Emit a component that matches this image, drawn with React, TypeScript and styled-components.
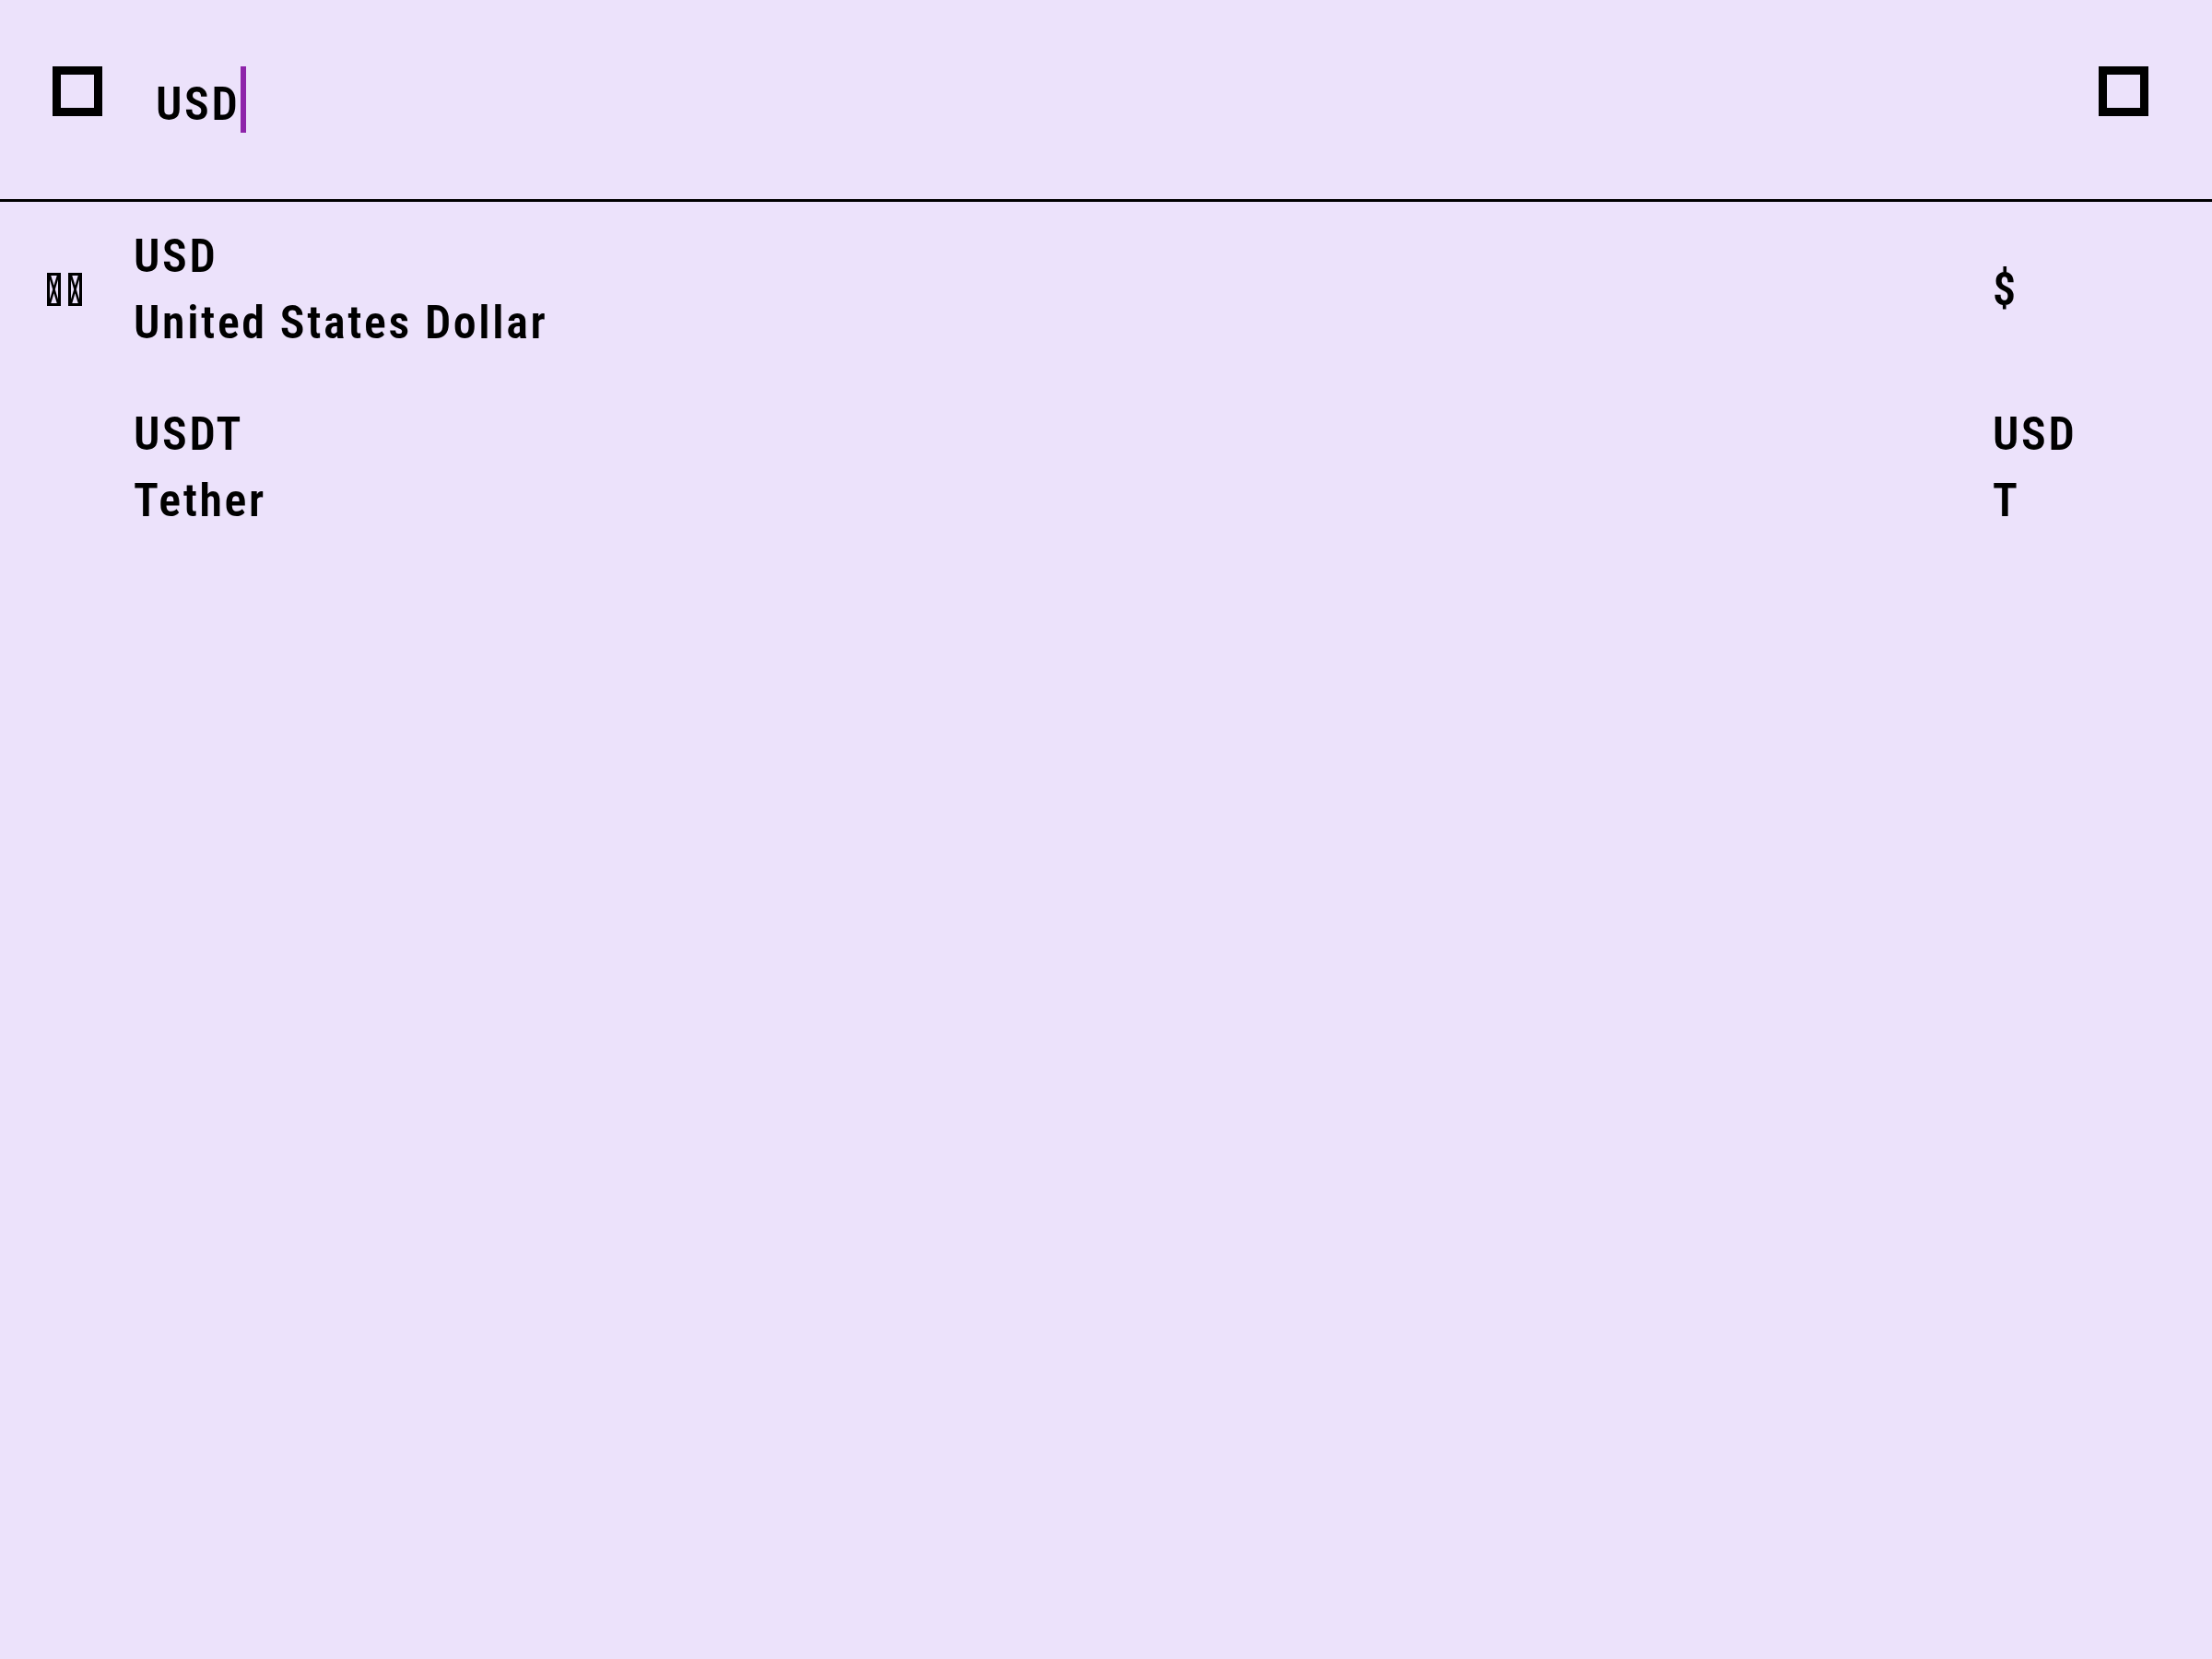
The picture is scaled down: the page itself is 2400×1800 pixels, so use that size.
import React, { useState } from "react";
import styled, { createGlobalStyle } from "styled-components";

const GlobalStyle = createGlobalStyle`
  html, body {
    margin: 0;
    padding: 0;
    background: #ece2fb;
  }
  body {
    font-family: Roboto, "Noto Sans", sans-serif;
    color: #000000;
  }
`;

type Currency = {
  code: string;
  name: string;
  flag: string;
  symbol: string;
};

const currencies: Currency[] = [
  { code: "USD", name: "United States Dollar", flag: "🇺🇸", symbol: "$" },
  { code: "USDT", name: "Tether", flag: "", symbol: "USDT" },
];

const Page = styled.div`
  min-height: 1800px;
  background: #ece2fb;
`;

const SearchBar = styled.header`
  display: flex;
  align-items: center;
  height: 219px;
  padding: 0 69px 0 57px;
  box-sizing: border-box;
  border-bottom: 3px solid #000000;
`;

const IconButton = styled.button`
  display: flex;
  align-items: center;
  justify-content: center;
  width: 54px;
  height: 54px;
  margin-top: -18px;
  padding: 0;
  border: none;
  background: transparent;
  cursor: pointer;
`;

// the icon font is missing in the reference, so each icon shows as an empty box
const MissingGlyph = styled.span`
  display: block;
  width: 54px;
  height: 54px;
  box-sizing: border-box;
  border: 9px solid #000000;
`;

const Label = styled.span`
  font-size: 50px;
  font-weight: 600;
  font-stretch: 75%;
  letter-spacing: 2.6px;
  line-height: 72px;
`;

const SearchField = styled.div`
  flex: 1;
  display: flex;
  align-items: center;
  margin-left: 58px;
`;

const SearchText = styled(Label)`
  margin-top: 10px;
`;

const Caret = styled.span`
  display: inline-block;
  width: 6px;
  height: 72px;
  margin-left: 1px;
  background: #8e24aa;
`;

const List = styled.ul`
  list-style: none;
  margin: 0;
  padding: 0;
`;

const Row = styled.li`
  display: grid;
  grid-template-columns: 97px 1fr 110px;
  align-items: center;
  padding: 23px 128px 26px 48px;
`;

const Flag = styled.span`
  display: flex;
  gap: 8px;
  padding-left: 3px;
`;

const Tofu = styled.svg`
  display: block;
  width: 15px;
  height: 36px;
`;

const Texts = styled.div`
  display: flex;
  flex-direction: column;
`;

const Trailing = styled(Label)`
  word-break: break-all;
`;

const MissingFlag: React.FC<{ flag: string }> = ({ flag }) => (
  <Flag role="img" aria-label={flag}>
    {[0, 1].map((i) => (
      <Tofu key={i} viewBox="0 0 15 36">
        <rect x="1.5" y="1.5" width="12" height="33" fill="none" stroke="#000" strokeWidth="3" />
        <path d="M3 3 L12 33 M12 3 L3 33" stroke="#000" strokeWidth="2.5" />
      </Tofu>
    ))}
  </Flag>
);

const App: React.FC = () => {
  const [query] = useState("USD");

  return (
    <Page>
      <GlobalStyle />
      <SearchBar>
        <IconButton aria-label="back">
          <MissingGlyph />
        </IconButton>
        <SearchField>
          <SearchText>{query}</SearchText>
          <Caret />
        </SearchField>
        <IconButton aria-label="clear">
          <MissingGlyph />
        </IconButton>
      </SearchBar>
      <List>
        {currencies.map((c) => (
          <Row key={c.code}>
            <span>{c.flag && <MissingFlag flag={c.flag} />}</span>
            <Texts>
              <Label>{c.code}</Label>
              <Label>{c.name}</Label>
            </Texts>
            <Trailing>{c.symbol}</Trailing>
          </Row>
        ))}
      </List>
    </Page>
  );
};

export default App;
